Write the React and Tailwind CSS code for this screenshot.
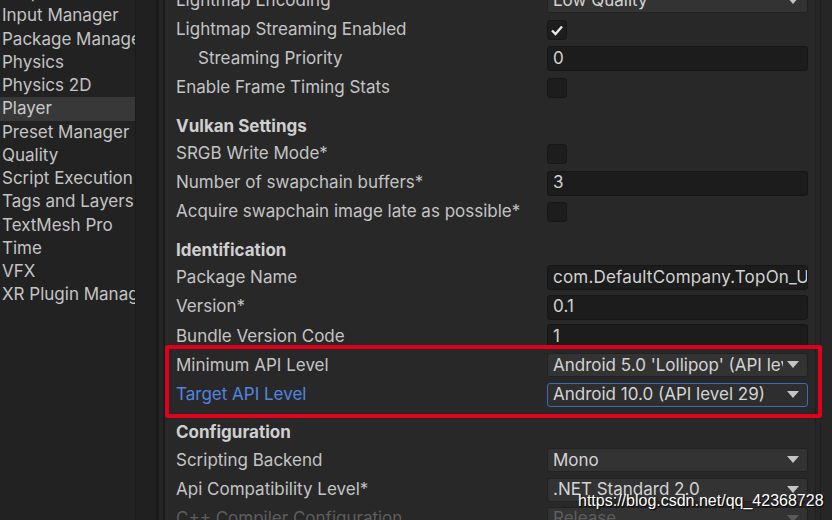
const sidebar = [
  "Graphics",
  "Input Manager",
  "Package Manager",
  "Physics",
  "Physics 2D",
  "Player",
  "Preset Manager",
  "Quality",
  "Script Execution Order",
  "Tags and Layers",
  "TextMesh Pro",
  "Time",
  "VFX",
  "XR Plugin Management",
];

const rows = [
  { label: "Lightmap Encoding", type: "select", value: "Low Quality" },
  { label: "Lightmap Streaming Enabled", type: "check", checked: true },
  { label: "Streaming Priority", type: "text", value: "0", indent: true },
  { label: "Enable Frame Timing Stats", type: "check" },
  { header: "Vulkan Settings" },
  { label: "SRGB Write Mode*", type: "check" },
  { label: "Number of swapchain buffers*", type: "text", value: "3" },
  { label: "Acquire swapchain image late as possible*", type: "check" },
  { header: "Identification" },
  { label: "Package Name", type: "text", value: "com.DefaultCompany.TopOn_Unity" },
  { label: "Version*", type: "text", value: "0.1" },
  { label: "Bundle Version Code", type: "text", value: "1" },
  { label: "Minimum API Level", type: "select", value: "Android 5.0 'Lollipop' (API level 21)" },
  { label: "Target API Level", type: "select", value: "Android 10.0 (API level 29)", focus: true },
  { header: "Configuration" },
  { label: "Scripting Backend", type: "select", value: "Mono" },
  { label: "Api Compatibility Level*", type: "select", value: ".NET Standard 2.0" },
  { label: "C++ Compiler Configuration", type: "select", value: "Release", disabled: true },
];

const Arrow = ({ dim }) => (
  <svg width="12" height="8" viewBox="0 0 12 8" className="shrink-0">
    <path d="M0 0 L12 0 L6 7 Z" fill={dim ? "#5a5a5a" : "#c4c4c4"} />
  </svg>
);

const Field = ({ row }) => {
  if (row.type === "check") {
    return (
      <div className="w-[20px] h-[20px] rounded-[3px] bg-[#1d1d1d] border border-[#171717] flex items-center justify-center">
        {row.checked && (
          <svg width="14" height="12" viewBox="0 0 14 12">
            <path d="M2 6.5 L5.5 10 L12 2.5" stroke="#e6e6e6" strokeWidth="2.4" fill="none" />
          </svg>
        )}
      </div>
    );
  }
  if (row.type === "text") {
    return (
      <div className="h-[25px] w-[261px] rounded-[3px] bg-[#1c1c1c] border border-[#161616] px-[5px] flex items-center overflow-hidden whitespace-nowrap text-[#d2d2d2] tracking-[0.2px]">
        {row.value}
      </div>
    );
  }
  return (
    <div
      className={`h-[24px] w-[261px] rounded-[3px] border pl-[5px] pr-[8px] flex items-center gap-[4px] ${
        row.focus ? "border-[#3a6bb4] bg-[#2e2e2e]" : "border-[#222222] bg-[#333333]"
      } ${row.disabled ? "text-[#5e5e5e] bg-[#2d2d2d]" : "text-[#d4d4d4]"}`}
    >
      <span className="flex-1 overflow-hidden whitespace-nowrap">{row.value}</span>
      <Arrow dim={row.disabled} />
    </div>
  );
};

export default function App() {
  return (
    <div
      className="relative w-[832px] h-[520px] overflow-hidden bg-[#282828] flex text-[17px]"
      style={{ fontFamily: "Inter, 'Noto Sans', sans-serif" }}
    >
      {/* project settings list */}
      <div className="w-[135px] shrink-0 bg-[#222222] overflow-hidden">
        <div className="-mt-[19px]">
          {sidebar.map((s) => (
            <div
              key={s}
              className={`h-[23.25px] leading-[23px] pl-[2px] whitespace-nowrap ${
                s === "Player" ? "bg-[#383838] text-[#c8c8c8]" : "text-[#c4c4c4]"
              }`}
            >
              {s}
            </div>
          ))}
        </div>
      </div>
      <div className="w-[21px] shrink-0 bg-[#202020] border-l border-[#1a1a1a]" />
      <div className="w-[3px] shrink-0 bg-[#191919]" />
      <div className="w-[4px] shrink-0 bg-[#252525]" />
      <div className="w-[2px] shrink-0 bg-[#1b1b1b]" />

      {/* inspector */}
      <div className="flex-1 overflow-hidden">
        <div className="-mt-[14px] pl-[11px] pr-[7px]">
          {rows.map((r, i) =>
            r.header ? (
              <div key={i} className="h-[36.5px] pt-[10px] leading-[26px] font-bold text-[#cfcfcf]">
                {r.header}
              </div>
            ) : (
              <div key={i} className="h-[29.2px] flex items-center">
                <div
                  className={`w-[371px] shrink-0 whitespace-nowrap ${r.indent ? "pl-[22px]" : ""} ${
                    r.focus ? "text-[#5384e0]" : r.disabled ? "text-[#5e5e5e]" : "text-[#c4c4c4]"
                  }`}
                >
                  {r.label}
                </div>
                <Field row={r} />
              </div>
            )
          )}
        </div>
      </div>

      {/* scrollbar */}
      <div className="w-[17px] shrink-0 bg-[#262626] border-l border-[#1e1e1e] flex">
        <div className="w-[5px] border-r border-[#1f1f1f]" />
      </div>

      {/* annotation */}
      <div className="absolute left-[165px] top-[345px] w-[657px] h-[73px] border-[4px] border-[#e0001b] rounded-[3px]" />
      <div
        className="absolute left-[578px] top-[489px] text-[16px] text-white"
        style={{ fontFamily: "'Liberation Sans', Arial, sans-serif", textShadow: "1px 1px 1px #000" }}
      >
        https://blog.csdn.net/qq_42368728
      </div>
    </div>
  );
}
